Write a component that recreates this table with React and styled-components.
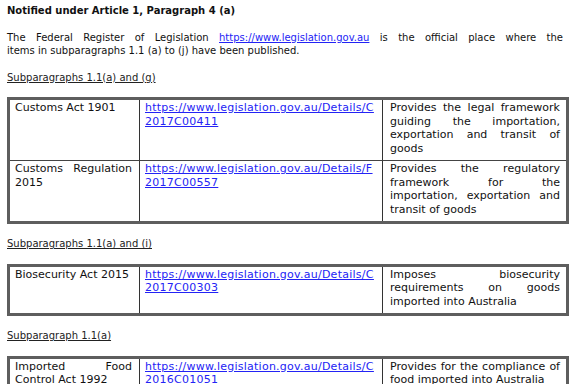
import styled, { createGlobalStyle } from "styled-components";

const GlobalStyle = createGlobalStyle`
  html, body {
    margin: 0;
    padding: 0;
    background: #ffffff;
  }
  body {
    font-family: "DejaVu Sans", Verdana, sans-serif;
    color: #111;
  }
`;

const sections = [
  {
    heading: "Subparagraphs 1.1(a) and (g)",
    rows: [
      {
        name: ["Customs Act 1901"],
        code: "C2017C00411",
        desc: [
          "Provides the legal framework",
          "guiding the importation,",
          "exportation and transit of",
          "goods",
        ],
      },
      {
        name: ["Customs Regulation", "2015"],
        code: "F2017C00557",
        desc: [
          "Provides the regulatory",
          "framework for the",
          "importation, exportation and",
          "transit of goods",
        ],
      },
    ],
  },
  {
    heading: "Subparagraphs 1.1(a) and (i)",
    rows: [
      {
        name: ["Biosecurity Act 2015"],
        code: "C2017C00303",
        desc: [
          "Imposes biosecurity",
          "requirements on goods",
          "imported into Australia",
        ],
      },
    ],
  },
  {
    heading: "Subparagraph 1.1(a)",
    rows: [
      {
        name: ["Imported Food", "Control Act 1992"],
        code: "C2016C01051",
        desc: ["Provides for the compliance of", "food imported into Australia"],
      },
    ],
  },
];

const Lines = ({ lines }) =>
  lines.map((text, i) => (
    <S.Line key={i} $last={i === lines.length - 1}>
      {text}
    </S.Line>
  ));

const App = () => {
  return (
    <>
      <GlobalStyle />
      <S.Page>
        <S.Title>Notified under Article 1, Paragraph 4 (a)</S.Title>
        <S.Para>
          <S.Line $last={false}>
            The Federal Register of Legislation{" "}
            <S.Link href="#">https://www.legislation.gov.au</S.Link> is the
            official place where the
          </S.Line>
          <S.Line $last>
            items in subparagraphs 1.1 (a) to (j) have been published.
          </S.Line>
        </S.Para>

        {sections.map((section) => (
          <S.Section key={section.heading}>
            <S.Heading>{section.heading}</S.Heading>
            <S.Table>
              <colgroup>
                <S.Col $width={130} />
                <S.Col $width={243} />
                <S.Col />
              </colgroup>
              <tbody>
                {section.rows.map((row) => (
                  <tr key={row.code}>
                    <S.Cell>
                      <Lines lines={row.name} />
                    </S.Cell>
                    <S.Cell>
                      <S.CellLink href="#">
                        <S.Line $last>
                          https://www.legislation.gov.au/Details/
                          {row.code.slice(0, 1)}
                        </S.Line>
                        <S.Line $last>{row.code.slice(1)}</S.Line>
                      </S.CellLink>
                    </S.Cell>
                    <S.Cell $wide>
                      <Lines lines={row.desc} />
                    </S.Cell>
                  </tr>
                ))}
              </tbody>
            </S.Table>
          </S.Section>
        ))}
      </S.Page>
    </>
  );
};

export default App;

const Page = styled.div`
  height: 384px;
  overflow: hidden;
  padding: 4px 8px 0 7px;
  box-sizing: border-box;
  font-size: 10px;
  line-height: 13.5px;
`;

const Title = styled.div`
  font-weight: bold;
  font-size: 10px;
`;

const Para = styled.div`
  margin-top: 13px;
  width: 556px;
`;

const Line = styled.span`
  display: block;
  white-space: nowrap;
  text-align: ${({ $last }) => ($last ? "left" : "justify")};
  text-align-last: ${({ $last }) => ($last ? "left" : "justify")};
`;

const Link = styled.a`
  color: #2323f5;
  text-decoration: underline;

  & > span {
    text-decoration: underline;
  }
`;

const CellLink = styled(Link)`
  letter-spacing: 0.25px;
`;

const Section = styled.section`
  margin-top: 13px;
`;

const Heading = styled.div`
  text-decoration: underline;
  margin-bottom: 13px;
  color: #222;
`;

const Table = styled.table`
  width: 562px;
  table-layout: fixed;
  border-collapse: separate;
  border-spacing: 0;
  border: 3px solid #5e5e5e;
  box-sizing: border-box;
  font-size: 11px;
  line-height: 13.5px;
`;

const Col = styled.col`
  width: ${({ $width }) => ($width ? `${$width}px` : "auto")};
`;

const Cell = styled.td`
  vertical-align: top;
  padding: 1px ${({ $wide }) => ($wide ? "6px 5px 7px" : "7px 4px 5px")};
  border-right: 1px solid #333;
  border-bottom: 1px solid #444;

  &:last-child {
    border-right: none;
  }
  tr:last-child > & {
    border-bottom: none;
  }
`;

const S = {
  Page,
  Title,
  Para,
  Line,
  Link,
  CellLink,
  Section,
  Heading,
  Table,
  Col,
  Cell,
};
